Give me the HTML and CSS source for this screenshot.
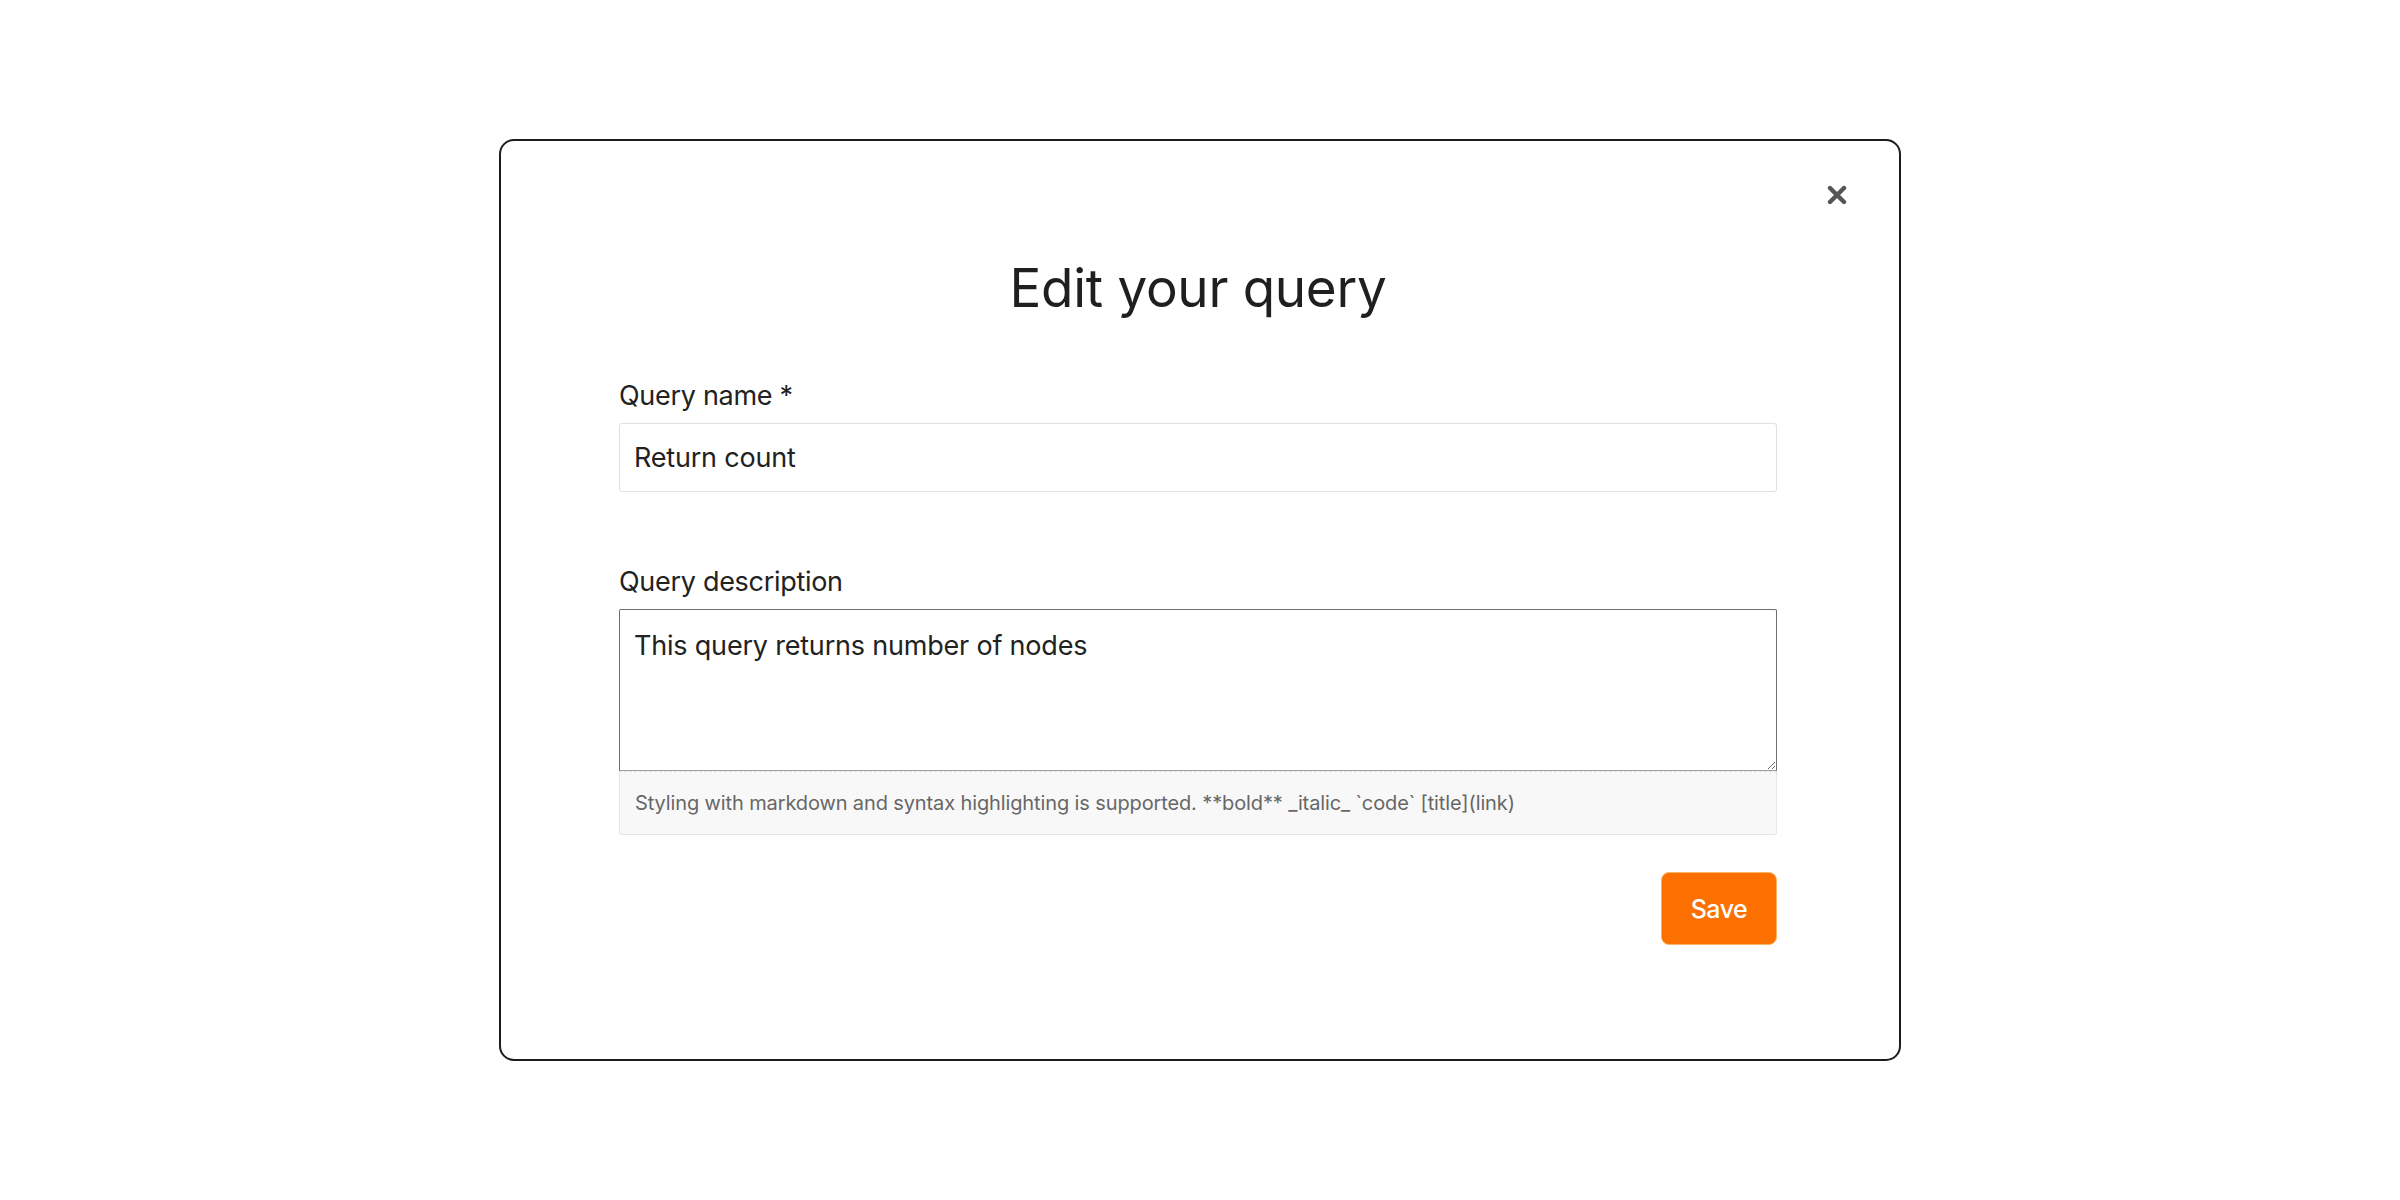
FILE: index.html
```html
<!DOCTYPE html>
<html lang="en">
<head>
<meta charset="utf-8">
<title>Edit your query</title>
<link rel="stylesheet" href="styles.css">
</head>
<body>
<div class="screen">
  <div class="modal">
    <button class="close" type="button" aria-label="Close">
      <svg viewBox="0 0 20 20" width="20" height="20"><path d="M3 3 L17 17 M17 3 L3 17" stroke="#555" stroke-width="4.4" stroke-linecap="round" fill="none"/></svg>
    </button>
    <h1 class="title">Edit your query</h1>
    <form class="form">
      <label class="label" for="qname">Query name *</label>
      <input class="input" id="qname" type="text" value="Return count">
      <label class="label label-desc" for="qdesc">Query description</label>
      <div class="desc">
        <textarea class="textarea" id="qdesc">This query returns number of nodes</textarea>
        <div class="help">Styling with markdown and syntax highlighting is supported. **bold** _italic_ `code` [title](link)</div>
      </div>
      <div class="actions">
        <button class="save" type="button">Save</button>
      </div>
    </form>
  </div>
</div>
</body>
</html>
```

FILE: styles.css
```css
* { box-sizing: border-box; }
html, body { margin: 0; padding: 0; background: #ffffff; }
body { font-family: Inter, "Noto Sans", "Liberation Sans", sans-serif; color: #222; }

.screen {
  height: 100vh;
  display: flex;
  align-items: center;
  justify-content: center;
}

.modal {
  position: relative;
  width: 1402px;
  height: 922px;
  border: 2px solid #1c1c1c;
  border-radius: 15px;
  background: #fff;
  padding: 115px 122px 0 118px;
}

.close {
  position: absolute;
  top: 44px;
  right: 52px;
  width: 20px;
  height: 20px;
  padding: 0;
  border: 0;
  background: transparent;
  display: flex;
}

.title {
  margin: 0;
  font-size: 53px;
  line-height: 64px;
  font-weight: 400;
  text-align: center;
  color: #1f1f1f;
  letter-spacing: -0.3px;
}

.form {
  display: flex;
  flex-direction: column;
  margin-top: 58px;
}

.label {
  font-size: 27px;
  line-height: 36px;
  color: #222;
  margin-bottom: 9px;
  letter-spacing: -0.3px;
}

.label-desc { margin-top: 72px; }

.input {
  height: 69px;
  border: 1px solid #e1e1e1;
  border-radius: 3px;
  padding: 0 14px;
  font-family: inherit;
  font-size: 27px;
  color: #222;
  background: #fff;
  letter-spacing: -0.2px;
  outline: none;
}

.desc { display: flex; flex-direction: column; }

.textarea {
  height: 162px;
  border: 1px solid #6f6f6f;
  border-bottom: 1px solid #a0a0a0;
  border-radius: 2px 2px 0 0;
  padding: 16px 14px 12px;
  font-family: inherit;
  font-size: 27px;
  line-height: 40px;
  color: #222;
  resize: vertical;
  outline: none;
  letter-spacing: -0.2px;
  display: block;
}

.help {
  height: 64px;
  display: flex;
  align-items: center;
  padding: 0 15px;
  background: #f8f8f8;
  border: 1px solid #e6e6e6;
  border-top: 1px dashed #e2e2e2;
  border-radius: 0 0 3px 3px;
  font-size: 20px;
  color: #676767;
  letter-spacing: -0.12px;
}

.actions {
  display: flex;
  justify-content: flex-end;
  margin-top: 37px;
}

.save {
  width: 116px;
  height: 73px;
  border: 1px solid #fdb466;
  border-radius: 8px;
  background: #fb7000;
  color: #fff;
  font-family: inherit;
  font-size: 25px;
  font-weight: 500;
  letter-spacing: -0.5px;
}
```
